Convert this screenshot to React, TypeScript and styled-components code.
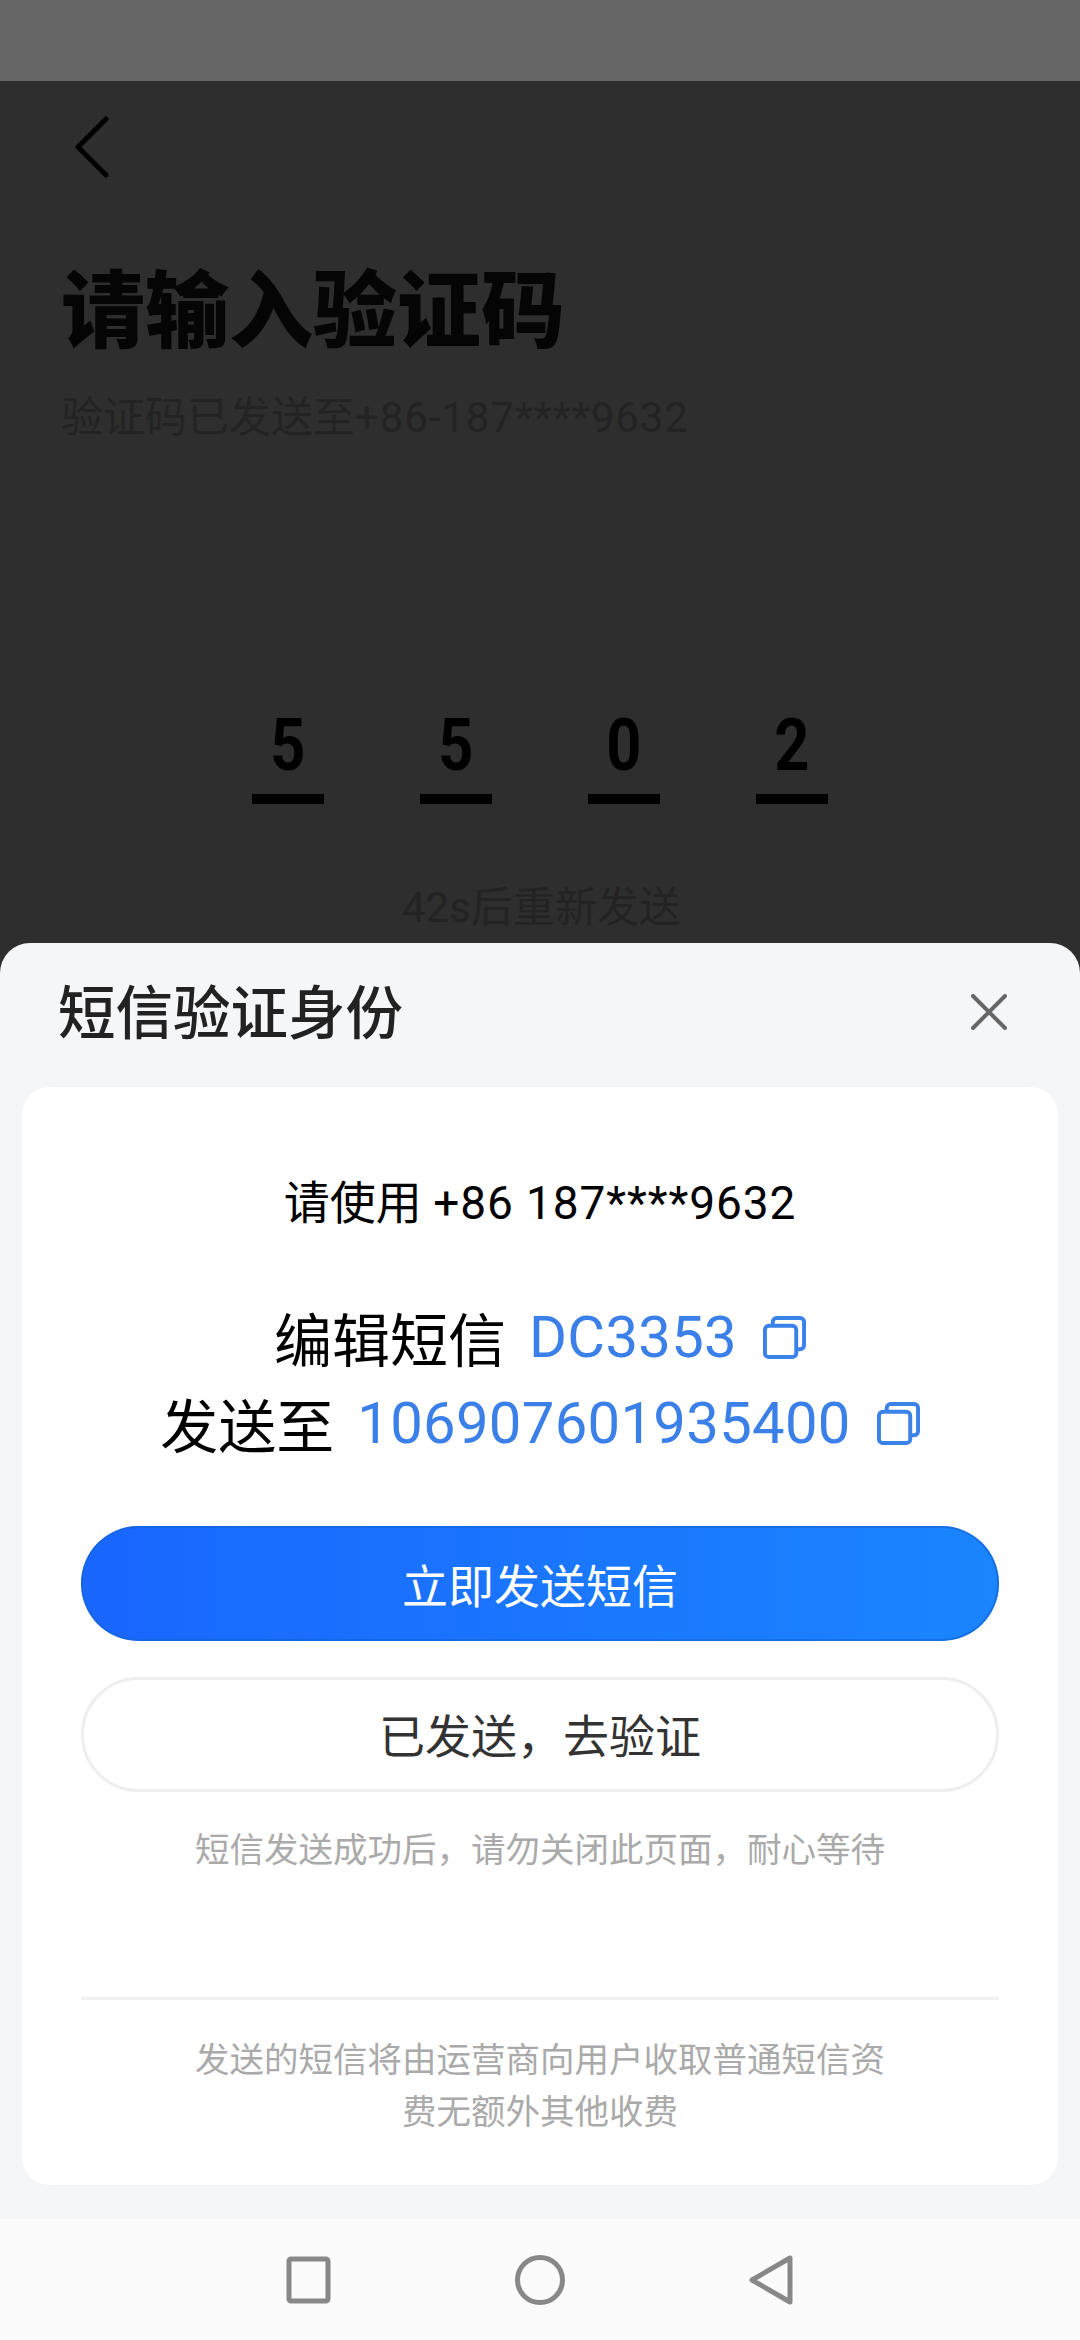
import React from "react";
import styled, { createGlobalStyle } from "styled-components";

const GlobalStyle = createGlobalStyle`
	html, body {
		margin: 0;
		padding: 0;
		background: #2e2e2e;
		font-family: "Roboto", "Noto Sans CJK SC", sans-serif;
	}
	* {
		box-sizing: border-box;
	}
`;

const Screen = styled.div`
	position: relative;
	width: 1080px;
	height: 2340px;
	overflow: hidden;
	background: #2e2e2e;
`;

const StatusBar = styled.div`
	height: 81px;
	background: #666666;
`;

const Page = styled.div`
	display: flex;
	flex-direction: column;
	padding: 33px 0 0 61px;
`;

const BackButton = styled.svg`
	display: block;
	width: 40px;
	height: 64px;
	margin-left: 11px;
`;

const PageTitle = styled.h1`
	margin: 80px 0 0;
	font-size: 84px;
	line-height: 110px;
	font-weight: 900;
	color: #050505;
	white-space: nowrap;
`;

const PageSub = styled.div`
	margin-top: 22px;
	font-size: 42px;
	line-height: 56px;
	color: #232323;
	white-space: nowrap;
`;

const Latin = styled.span`
	letter-spacing: 0.9px;
`;

const CodeRow = styled.div`
	display: flex;
	gap: 96px;
	margin: 266px 0 0 191px;
`;

const CodeCell = styled.div`
	width: 72px;
	height: 92px;
	border-bottom: 10px solid #000000;
	text-align: center;
	font-size: 73px;
	line-height: 66px;
	font-weight: 700;
	color: #000000;
`;

const Digit = styled.span`
	display: inline-block;
	transform: scaleX(0.84);
`;

const Resend = styled.div`
	margin: 76px 0 0 341px;
	font-size: 42px;
	line-height: 56px;
	color: #232323;
	white-space: nowrap;
`;

const Sheet = styled.div`
	position: absolute;
	left: 0;
	right: 0;
	bottom: 0;
	height: 1397px;
	display: flex;
	flex-direction: column;
	background: #f5f6f8;
	border-radius: 30px 30px 0 0;
`;

const SheetHeader = styled.div`
	display: flex;
	align-items: center;
	justify-content: space-between;
	height: 144px;
	padding: 0 73px 6px 58px;
`;

const SheetTitle = styled.div`
	font-size: 57.5px;
	line-height: 70px;
	font-weight: 500;
	color: #222222;
	margin-top: 6px;
`;

const CloseIcon = styled.svg`
	display: block;
	width: 36px;
	height: 36px;
`;

const Card = styled.div`
	display: flex;
	flex-direction: column;
	height: 1098px;
	margin: 0 22px;
	padding: 86px 59px 0;
	background: #ffffff;
	border-radius: 28px;
`;

const UsePhone = styled.div`
	font-size: 46px;
	line-height: 60px;
	color: #000000;
	text-align: center;
`;

const SendRow = styled.div<{ $first?: boolean }>`
	display: flex;
	align-items: center;
	justify-content: center;
	gap: 23px;
	height: 86px;
	margin-top: ${(p) => (p.$first ? "61px" : "0")};
	font-size: 58px;
	color: #000000;
	white-space: nowrap;
`;

const SendValue = styled.span`
	color: #3b7fe8;
	letter-spacing: 0.3px;
`;

const CopyIcon = styled.svg`
	display: block;
	width: 43px;
	height: 43px;
	margin-left: 3px;
`;

const PrimaryButton = styled.button`
	display: block;
	width: 100%;
	height: 115px;
	margin-top: 60px;
	padding: 0 0 2px;
	border: none;
	border-radius: 58px;
	background: linear-gradient(90deg, #1a66ff 0%, #1a85ff 100%);
	box-shadow: inset 0 0 0 2px rgba(20, 100, 210, 0.6);
	font-family: inherit;
	font-size: 46px;
	color: #ffffff;
`;

const OutlineButton = styled.button`
	display: block;
	width: 100%;
	height: 115px;
	margin-top: 36px;
	padding: 0 0 4px;
	border: 3px solid #eeeeee;
	border-radius: 58px;
	background: #ffffff;
	font-family: inherit;
	font-size: 46px;
	color: #333333;
`;

const Hint = styled.div`
	font-size: 34.5px;
	line-height: 52px;
	color: #aaaaaa;
	text-align: center;
`;

const SentHint = styled(Hint)`
	margin-top: 32px;
`;

const Divider = styled.div`
	height: 3px;
	margin-top: 121px;
	background: #f0f0f0;
`;

const FooterHint = styled(Hint)`
	margin: 34px auto 0;
	width: 700px;
`;

const NavBar = styled.div`
	display: flex;
	align-items: center;
	justify-content: center;
	height: 121px;
	margin-top: auto;
	background: #fbfbfb;
`;

const NavSlot = styled.div`
	display: flex;
	justify-content: center;
	width: 232px;
`;

const NavIcon = styled.svg`
	display: block;
	width: 52px;
	height: 52px;
`;

const Copy = () => (
	<CopyIcon viewBox="0 0 44 44" fill="none" stroke="#3b82e8" strokeWidth="4">
		<rect x="2" y="10" width="32" height="32" rx="4" />
		<path d="M10 9V6a4 4 0 0 1 4-4h24a4 4 0 0 1 4 4v24a4 4 0 0 1-4 4h-3" />
	</CopyIcon>
);

export default function App() {
	return (
		<Screen>
			<GlobalStyle />
			<StatusBar />
			<Page>
				<BackButton viewBox="0 0 40 64" fill="none" stroke="#000000" strokeWidth="5" strokeLinecap="round" strokeLinejoin="round">
					<path d="M34 5L6 33l28 28" />
				</BackButton>
				<PageTitle>请输入验证码</PageTitle>
				<PageSub>
					验证码已发送至<Latin>+86-187****9632</Latin>
				</PageSub>
				<CodeRow>
					{["5", "5", "0", "2"].map((digit, i) => (
						<CodeCell key={i}>
							<Digit>{digit}</Digit>
						</CodeCell>
					))}
				</CodeRow>
				<Resend>42s后重新发送</Resend>
			</Page>
			<Sheet>
				<SheetHeader>
					<SheetTitle>短信验证身份</SheetTitle>
					<CloseIcon viewBox="0 0 36 36" fill="none" stroke="#666666" strokeWidth="4" strokeLinecap="round">
						<path d="M2 2l32 32M34 2L2 34" />
					</CloseIcon>
				</SheetHeader>
				<Card>
					<UsePhone>
						请使用 <Latin>+86 187****9632</Latin>
					</UsePhone>
					<SendRow $first>
						<span>编辑短信</span>
						<SendValue>DC3353</SendValue>
						<Copy />
					</SendRow>
					<SendRow>
						<span>发送至</span>
						<SendValue>106907601935400</SendValue>
						<Copy />
					</SendRow>
					<PrimaryButton>立即发送短信</PrimaryButton>
					<OutlineButton>已发送，去验证</OutlineButton>
					<SentHint>短信发送成功后，请勿关闭此页面，耐心等待</SentHint>
					<Divider />
					<FooterHint>发送的短信将由运营商向用户收取普通短信资费无额外其他收费</FooterHint>
				</Card>
				<NavBar>
					<NavSlot>
						<NavIcon viewBox="0 0 52 52" fill="none" stroke="#888888" strokeWidth="5">
							<rect x="7" y="5" width="39" height="42" rx="2" />
						</NavIcon>
					</NavSlot>
					<NavSlot>
						<NavIcon viewBox="0 0 52 52" fill="none" stroke="#888888" strokeWidth="5">
							<circle cx="26" cy="26" r="22.5" />
						</NavIcon>
					</NavSlot>
					<NavSlot>
						<NavIcon viewBox="0 0 52 52" fill="none" stroke="#888888" strokeWidth="5" strokeLinejoin="round">
							<path d="M44 4v44L6 26z" />
						</NavIcon>
					</NavSlot>
				</NavBar>
			</Sheet>
		</Screen>
	);
}
